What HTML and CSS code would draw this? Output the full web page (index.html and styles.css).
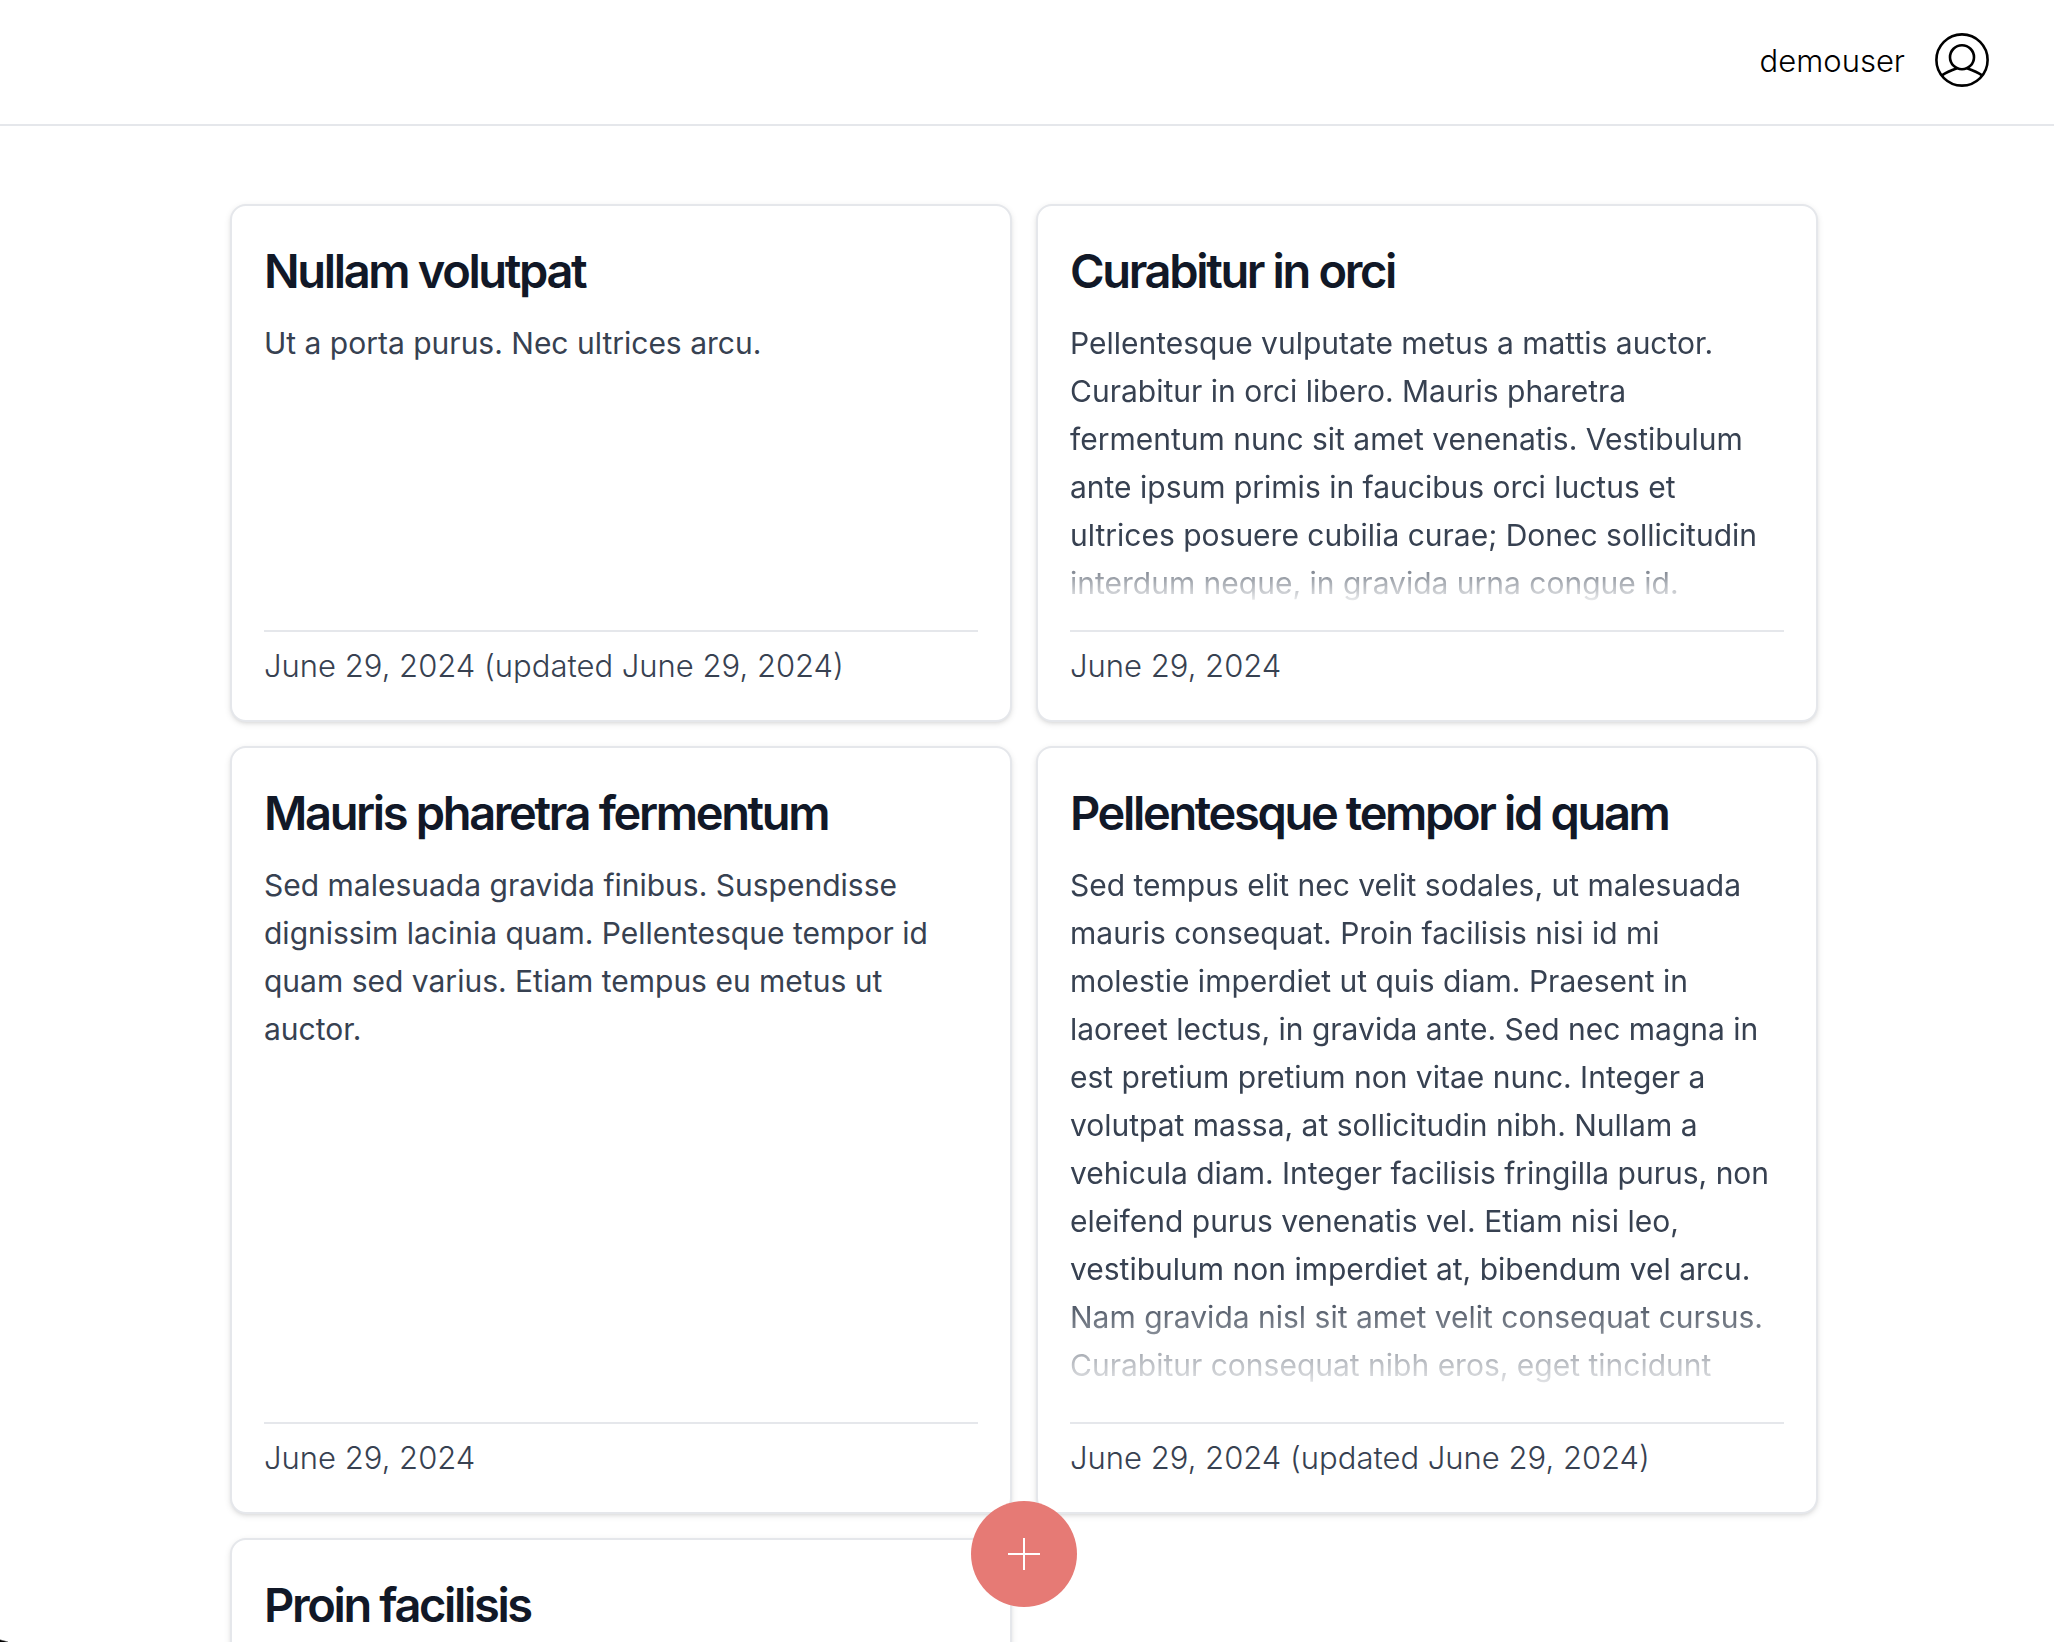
FILE: index.html
```html
<!DOCTYPE html>
<html lang="en">
<head>
<meta charset="utf-8">
<meta name="viewport" content="width=device-width, initial-scale=1">
<title>Notes</title>
<link rel="stylesheet" href="styles.css">
</head>
<body>
<div class="app">
  <header class="topbar">
    <span class="username">demouser</span>
    <button class="avatar" type="button" aria-label="Account">
      <svg viewBox="0 0 54 54" fill="none" stroke="currentColor" stroke-width="2.6">
        <circle cx="27" cy="27" r="25.6"/>
        <circle cx="27" cy="24.2" r="12"/>
        <path d="M6.5 42.6C11 39.4 16 37.2 22 35.2M47.5 42.6C43 39.4 38 37.2 32 35.2"/>
      </svg>
    </button>
  </header>
  <main class="content">
    <div class="notes">
      <article class="card">
        <h2 class="card-title">Nullam volutpat</h2>
        <p class="card-body">Ut a porta purus. Nec ultrices arcu.</p>
        <footer class="card-date">June 29, 2024 (updated June 29, 2024)</footer>
      </article>
      <article class="card">
        <h2 class="card-title">Curabitur in orci</h2>
        <p class="card-body card-body-faded">Pellentesque vulputate metus a mattis auctor. Curabitur in orci libero. Mauris pharetra fermentum nunc sit amet venenatis. Vestibulum ante ipsum primis in faucibus orci luctus et ultrices posuere cubilia curae; Donec sollicitudin interdum neque, in gravida urna congue id.</p>
        <footer class="card-date">June 29, 2024</footer>
      </article>
      <article class="card">
        <h2 class="card-title">Mauris pharetra fermentum</h2>
        <p class="card-body">Sed malesuada gravida finibus. Suspendisse dignissim lacinia quam. Pellentesque tempor id quam sed varius. Etiam tempus eu metus ut auctor.</p>
        <footer class="card-date">June 29, 2024</footer>
      </article>
      <article class="card card-tall">
        <h2 class="card-title">Pellentesque tempor id quam</h2>
        <p class="card-body card-body-faded">Sed tempus elit nec velit sodales, ut malesuada mauris consequat. Proin facilisis nisi id mi molestie imperdiet ut quis diam. Praesent in laoreet lectus, in gravida ante. Sed nec magna in est pretium pretium non vitae nunc. Integer a volutpat massa, at sollicitudin nibh. Nullam a vehicula diam. Integer facilisis fringilla purus, non eleifend purus venenatis vel. Etiam nisi leo, vestibulum non imperdiet at, bibendum vel arcu. Nam gravida nisl sit amet velit consequat cursus. Curabitur consequat nibh eros, eget tincidunt</p>
        <footer class="card-date">June 29, 2024 (updated June 29, 2024)</footer>
      </article>
      <article class="card">
        <h2 class="card-title">Proin facilisis</h2>
      </article>
    </div>
  </main>
  <div class="fab-layer">
    <button class="fab" type="button" aria-label="Add note">
      <svg viewBox="0 0 34 34" fill="none" stroke="currentColor" stroke-width="2"><path d="M17 1V33M1 17H33"/></svg>
    </button>
  </div>
</div>
</body>
</html>
```
FILE: styles.css
```css
* { box-sizing: border-box; }

body {
  margin: 0;
  background: #fff;
  color: #000;
  font-family: Inter, "Liberation Sans", sans-serif;
  font-size: 30px;
  line-height: 48px;
}

.app {
  display: flex;
  flex-direction: column;
  height: 100vh;
}

/* rounded corner of the window */
.app::after {
  content: "";
  position: fixed;
  left: 0;
  bottom: 0;
  width: 8px;
  height: 3px;
  background: linear-gradient(15deg, #000 30%, transparent 60%);
}

.topbar {
  display: flex;
  flex: none;
  align-items: center;
  justify-content: flex-end;
  gap: 30px;
  padding: 32px 65px 36px 32px;
  border-bottom: 2px solid #e5e7eb;
}

.username {
  padding-top: 2px;
  font-size: 31px;
  font-weight: 300;
}

.avatar {
  display: flex;
  margin: 1px 0;
  padding: 0;
  border: 0;
  background: none;
  color: #000;
}

.avatar svg { width: 54px; height: 54px; }

.content {
  flex: 1;
  min-height: 0;
  overflow-y: auto;
  scrollbar-width: none;
  padding: 78px 38px 0 32px;
}

.notes {
  display: grid;
  grid-template-columns: repeat(2, minmax(0, 1fr));
  gap: 24px;
  max-width: 1588px;
  margin: 0 auto;
}

.card {
  display: flex;
  flex-direction: column;
  min-height: 518px;
  max-height: 768px;
  padding: 33px 32px 30px;
  border: 2px solid #e5e7eb;
  border-radius: 16px;
  background: #fff;
  box-shadow: 0 2px 6px rgba(0, 0, 0, 0.1), 0 2px 4px -2px rgba(0, 0, 0, 0.1);
}

.card-tall { min-height: 768px; }

.card-title {
  margin: 0 0 16px;
  color: #111827;
  font-size: 47px;
  font-weight: 600;
  line-height: 64px;
  letter-spacing: -0.05em;
}

.card-body {
  flex: 1;
  min-height: 0;
  margin: 0 0 23px;
  overflow: hidden;
  color: #374151;
}

.card-body-faded {
  -webkit-mask-image: linear-gradient(#000 80%, transparent);
  mask-image: linear-gradient(#000 80%, transparent);
}

.card-date {
  padding-top: 10px;
  border-top: 2px solid #e5e7eb;
  color: #374151;
  font-size: 31px;
  font-weight: 300;
}

.fab-layer {
  position: fixed;
  left: 0;
  right: 6px;
  bottom: 35px;
  display: flex;
  justify-content: center;
  pointer-events: none;
}

.fab {
  display: flex;
  align-items: center;
  justify-content: center;
  width: 106px;
  height: 106px;
  padding: 0;
  border: 0;
  border-radius: 50%;
  background: #e67a75;
  color: #fff;
  pointer-events: auto;
}

.fab svg { width: 34px; height: 34px; }
```
